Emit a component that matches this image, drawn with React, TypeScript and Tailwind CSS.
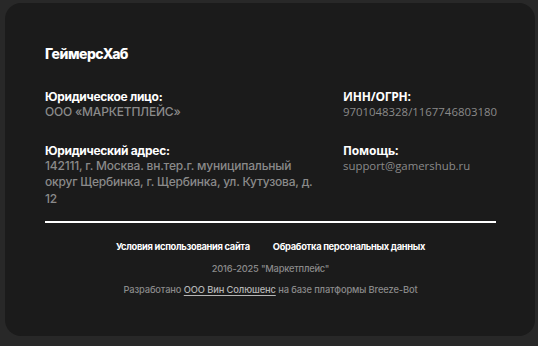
import React from 'react';

const gilroy = { fontFamily: 'Inter, "Noto Sans", sans-serif' };

const Field: React.FC<{ label: string; value: string; alt?: boolean }> = ({ label, value, alt }) => (
  <div className={alt ? 'font-["Open_Sans",sans-serif]' : 'font-["Inter",sans-serif]'}>
    <div className={`text-white font-bold ${alt ? 'text-[12px] tracking-[-0.2px]' : 'text-[12px] tracking-[-0.3px]'} leading-[15px]`}>{label}</div>
    <div className={`text-[#8a8a8a] leading-[16.5px] ${alt ? 'text-[11.4px]' : 'text-[12px] font-medium tracking-[-0.2px]'}`}>{value}</div>
  </div>
);

export default function App() {
  return (
    <div className="w-[538px] h-[346px] overflow-hidden bg-[#282828] pt-[3px] pl-[5px] pr-[3px]">
      <div className="h-[333px] rounded-2xl bg-[#1b1b1b] px-10 pt-[43px]" style={gilroy}>
        <div className="text-white font-extrabold text-[14px] leading-[16px] tracking-[-0.5px]">ГеймерсХаб</div>

        <div className="grid grid-cols-[298px_1fr] gap-y-[22px] mt-[27px]">
          <Field label="Юридическое лицо:" value="ООО «МАРКЕТПЛЕЙС»" />
          <Field alt label="ИНН/ОГРН:" value="9701048328/1167746803180" />
          <div className="pr-[20px]">
            <Field label="Юридический адрес:" value="142111, г. Москва. вн.тер.г. муниципальный округ Щербинка, г. Щербинка, ул. Кутузова, д. 12" />
          </div>
          <Field alt label="Помощь:" value="support@gamershub.ru" />
        </div>

        <div className="mt-[14px] h-[2px] bg-white w-[451px]" />

        <div className="w-[451px] flex flex-col items-center">
          <div className="flex gap-[23px] mt-[18px] text-white font-bold text-[9.3px] leading-[12px] tracking-[-0.3px]">
            <span>Условия использования сайта</span>
            <span>Обработка персональных данных</span>
          </div>
          <div className="mt-[10px] text-[#8a8a8a] font-medium text-[9.3px] leading-[12px] tracking-[-0.2px]">2016-2025 "Маркетплейс"</div>
          <div className="mt-[9px] text-[#8a8a8a] font-medium text-[9.3px] leading-[12px] tracking-[-0.1px]">
            Разработано <span className="text-[#b5b5b5] underline underline-offset-2">ООО Вин Солюшенс</span> на базе платформы Breeze-Bot
          </div>
        </div>
      </div>
    </div>
  );
}
